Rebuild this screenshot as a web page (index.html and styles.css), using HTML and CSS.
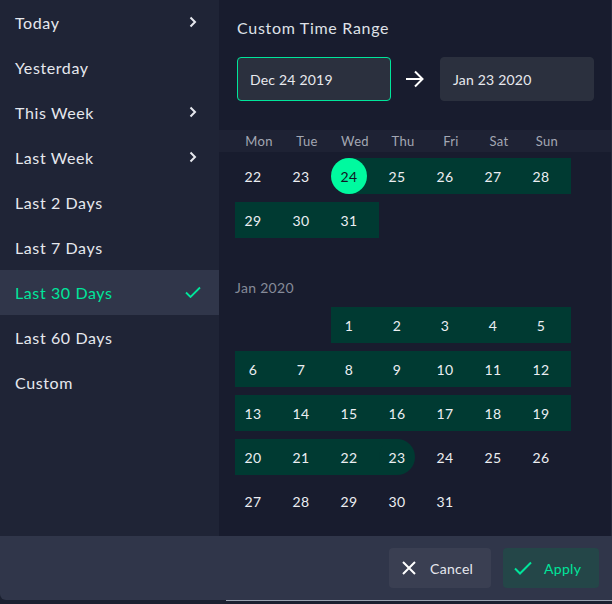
FILE: index.html
```html
<!DOCTYPE html>
<html lang="en">
<head>
  <meta charset="UTF-8"/>
  <meta name="viewport" content="width=device-width, initial-scale=1.0"/>
  <title>Time Range Picker</title>
  <link rel="stylesheet" href="styles.css">
</head>
<body>
  <div class="picker">
    <div class="main">
      <ul class="presets">
        <li class="preset">Today <svg class="chev" viewBox="0 0 8 12"><path d="M1.5 1.5L6 6l-4.5 4.5"/></svg></li>
        <li class="preset">Yesterday</li>
        <li class="preset">This Week <svg class="chev" viewBox="0 0 8 12"><path d="M1.5 1.5L6 6l-4.5 4.5"/></svg></li>
        <li class="preset">Last Week <svg class="chev" viewBox="0 0 8 12"><path d="M1.5 1.5L6 6l-4.5 4.5"/></svg></li>
        <li class="preset">Last 2 Days</li>
        <li class="preset">Last 7 Days</li>
        <li class="preset active">Last 30 Days <svg class="check" viewBox="0 0 16 12"><path d="M1 6.5l4.5 4.5L15 1.5"/></svg></li>
        <li class="preset">Last 60 Days</li>
        <li class="preset">Custom</li>
      </ul>

      <div class="custom">
        <h2 class="title">Custom Time Range</h2>
        <div class="inputs">
          <div class="date-input focused">Dec 24 2019</div>
          <svg class="arrow" viewBox="0 0 20 18"><path d="M1 9h17M10 1.5L17.5 9 10 16.5"/></svg>
          <div class="date-input">Jan 23 2020</div>
        </div>

        <div class="weekdays">
          <span>Mon</span><span>Tue</span><span>Wed</span><span>Thu</span><span>Fri</span><span>Sat</span><span>Sun</span>
        </div>

        <div class="months">
          <div class="grid">
            <div class="day"><span>22</span></div>
            <div class="day"><span>23</span></div>
            <div class="day start"><span>24</span></div>
            <div class="day range"><span>25</span></div>
            <div class="day range"><span>26</span></div>
            <div class="day range"><span>27</span></div>
            <div class="day range"><span>28</span></div>
            <div class="day range"><span>29</span></div>
            <div class="day range"><span>30</span></div>
            <div class="day range"><span>31</span></div>
          </div>

          <div class="month-label">Jan 2020</div>
          <div class="grid">
            <div class="day"></div>
            <div class="day"></div>
            <div class="day range"><span>1</span></div>
            <div class="day range"><span>2</span></div>
            <div class="day range"><span>3</span></div>
            <div class="day range"><span>4</span></div>
            <div class="day range"><span>5</span></div>
            <div class="day range"><span>6</span></div>
            <div class="day range"><span>7</span></div>
            <div class="day range"><span>8</span></div>
            <div class="day range"><span>9</span></div>
            <div class="day range"><span>10</span></div>
            <div class="day range"><span>11</span></div>
            <div class="day range"><span>12</span></div>
            <div class="day range"><span>13</span></div>
            <div class="day range"><span>14</span></div>
            <div class="day range"><span>15</span></div>
            <div class="day range"><span>16</span></div>
            <div class="day range"><span>17</span></div>
            <div class="day range"><span>18</span></div>
            <div class="day range"><span>19</span></div>
            <div class="day range"><span>20</span></div>
            <div class="day range"><span>21</span></div>
            <div class="day range"><span>22</span></div>
            <div class="day end"><span>23</span></div>
            <div class="day"><span>24</span></div>
            <div class="day"><span>25</span></div>
            <div class="day"><span>26</span></div>
            <div class="day"><span>27</span></div>
            <div class="day"><span>28</span></div>
            <div class="day"><span>29</span></div>
            <div class="day"><span>30</span></div>
            <div class="day"><span>31</span></div>
          </div>
        </div>
      </div>
    </div>

    <div class="footer">
      <button class="btn cancel"><svg viewBox="0 0 14 14"><path d="M1 1l12 12M13 1L1 13"/></svg>Cancel</button>
      <button class="btn apply"><svg viewBox="0 0 18 14"><path d="M1 7.5l5 5L17 1.5"/></svg>Apply</button>
    </div>
  </div>
  <div class="edge"></div>
</body>
</html>
```

FILE: styles.css
```css
* {
  box-sizing: border-box;
}
body {
  margin: 0;
  background-color: #1b2030;
  font-family: Lato, "Noto Sans", sans-serif;
  color: #e6e8ee;
}
.picker {
  width: 612px;
  height: 600px;
  display: flex;
  flex-direction: column;
  overflow: hidden;
  border-radius: 0 0 0 6px;
}
.main {
  display: flex;
  height: 536px;
}
.presets {
  list-style: none;
  margin: 0;
  padding: 0;
  width: 219px;
  background-color: #1f2436;
}
.preset {
  height: 45px;
  padding: 0 18px 1px 15px;
  display: flex;
  justify-content: space-between;
  align-items: center;
  font-size: 16px;
  letter-spacing: 0.6px;
  color: #e6e8ee;
}
.preset.active {
  background-color: #30364a;
  color: #00e59b;
}
.chev {
  width: 8px;
  height: 12px;
  margin-right: 4px;
  fill: none;
  stroke: #e6e8ee;
  stroke-width: 2;
}
.check {
  width: 16px;
  height: 12px;
  fill: none;
  stroke: #00e59b;
  stroke-width: 1.8;
}
.custom {
  flex: 1;
  background-color: #181c2e;
  border-right: 1px solid #262b3c;
}
.title {
  margin: 18px 0 0 18px;
  font-size: 16px;
  font-weight: normal;
  letter-spacing: 0.7px;
  line-height: 20px;
  color: #dfe1e7;
}
.inputs {
  display: flex;
  align-items: center;
  margin: 19px 0 0 18px;
}
.date-input {
  width: 154px;
  height: 44px;
  padding-left: 12px;
  display: flex;
  align-items: center;
  background-color: #2b303e;
  border: 1px solid #2b303e;
  border-radius: 4px;
  font-size: 14px;
  letter-spacing: 0.2px;
  color: #e8e9ee;
}
.date-input.focused {
  border-color: #00e59b;
}
.arrow {
  width: 20px;
  height: 18px;
  margin: 0 15px 0 14px;
  fill: none;
  stroke: #ffffff;
  stroke-width: 2;
}
.weekdays {
  margin-top: 29px;
  height: 22px;
  padding-left: 16px;
  display: grid;
  grid-template-columns: repeat(7, 48px);
  align-items: center;
  background-color: #1e2234;
  font-size: 13px;
  letter-spacing: 0.3px;
  color: #a3a7b3;
}
.weekdays span {
  text-align: center;
}
.months {
  padding: 6px 0 0 16px;
}
.grid {
  display: grid;
  grid-template-columns: repeat(7, 48px);
  row-gap: 8px;
}
.day {
  height: 36px;
}
.day span {
  width: 36px;
  height: 36px;
  display: flex;
  justify-content: center;
  align-items: center;
  font-size: 14px;
  letter-spacing: 0.3px;
  color: #eceef2;
}
.day.range {
  background-color: #003a32;
}
.day.start {
  background: linear-gradient(to right, transparent 18px, #003a32 18px);
}
.day.start span {
  background-color: #00fa9f;
  border-radius: 50%;
  color: #101624;
}
.day.end {
  background: linear-gradient(to right, #003a32 18px, transparent 18px);
}
.day.end span {
  background-color: #003a32;
  border-radius: 50%;
}
.month-label {
  margin: 42px 0 11px 0;
  height: 16px;
  line-height: 16px;
  font-size: 14px;
  letter-spacing: 0.3px;
  color: #868b99;
}
.footer {
  height: 64px;
  display: flex;
  justify-content: flex-end;
  align-items: center;
  gap: 12px;
  padding-right: 13px;
  background-color: #30364a;
}
.btn {
  height: 40px;
  display: flex;
  align-items: center;
  border: none;
  border-radius: 4px;
  font-family: inherit;
  font-size: 14px;
  letter-spacing: 0.3px;
  cursor: pointer;
}
.btn svg {
  fill: none;
  stroke-width: 2;
}
.cancel {
  width: 102px;
  padding-left: 13px;
  background-color: #3a3f52;
  color: #e6e8ee;
}
.cancel svg {
  width: 14px;
  height: 14px;
  margin-right: 14px;
  stroke: #ffffff;
}
.apply {
  width: 96px;
  padding-left: 11px;
  background-color: #244648;
  color: #00e59b;
}
.apply svg {
  width: 18px;
  height: 14px;
  margin-right: 12px;
  stroke: #00e59b;
}
.edge {
  margin-left: 226px;
  height: 1px;
  background-color: #9aa2b0;
}
```
